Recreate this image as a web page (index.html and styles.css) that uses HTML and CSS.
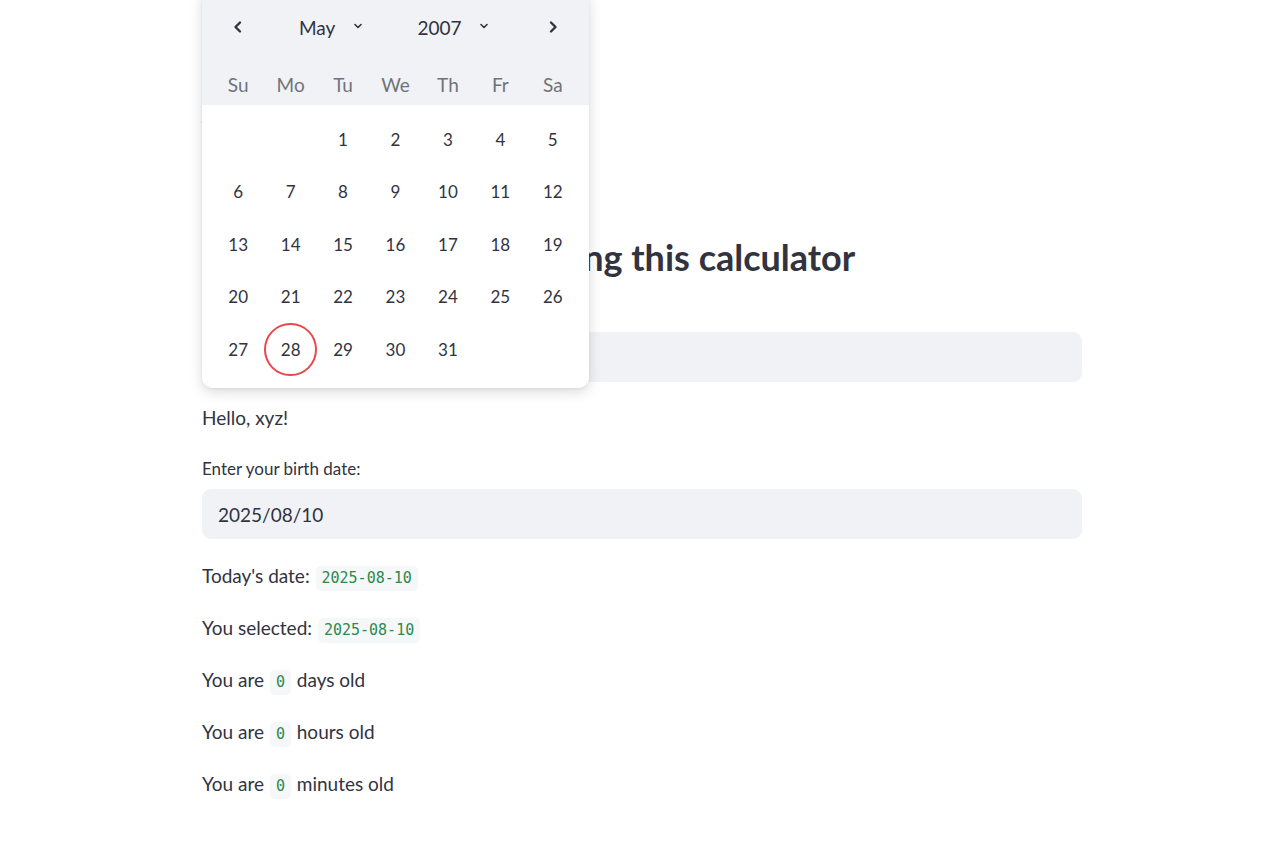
FILE: index.html
```html
<!DOCTYPE html>
<html>
<head>
<meta charset="utf-8">
<link rel="stylesheet" href="styles.css">
</head>
<body>
<main class="main">
  <h1 class="title">Age Calculator</h1>
  <h2 class="heading"><span class="heading-lead">Find your precise age </span>using this calculator</h2>
  <label class="label label-name">Enter your name:</label>
  <div class="input input-name">xyz</div>
  <p class="text text-hello">Hello, xyz!</p>
  <label class="label label-date">Enter your birth date:</label>
  <div class="input input-date">2025/08/10</div>
  <p class="text text-first">Today's date: <code class="code">2025-08-10</code></p>
  <p class="text">You selected: <code class="code">2025-08-10</code></p>
  <p class="text">You are <code class="code">0</code> days old</p>
  <p class="text">You are <code class="code">0</code> hours old</p>
  <p class="text">You are <code class="code">0</code> minutes old</p>
</main>

<div class="popover">
  <div class="cal-head">
    <div class="nav-row">
      <span class="nav-btn">
        <svg width="14" height="14" viewBox="0 0 14 14"><path d="M9 2.5 L4.5 7 L9 11.5" fill="none" stroke="#31333f" stroke-width="2.4" stroke-linecap="round" stroke-linejoin="round"/></svg>
      </span>
      <span class="select select-month">May
        <svg class="caret" width="10" height="8" viewBox="0 0 10 8"><path d="M2 2.5 L5 5.5 L8 2.5" fill="none" stroke="#31333f" stroke-width="1.6" stroke-linecap="round" stroke-linejoin="round"/></svg>
      </span>
      <span class="select select-year">2007
        <svg class="caret" width="10" height="8" viewBox="0 0 10 8"><path d="M2 2.5 L5 5.5 L8 2.5" fill="none" stroke="#31333f" stroke-width="1.6" stroke-linecap="round" stroke-linejoin="round"/></svg>
      </span>
      <span class="nav-btn">
        <svg width="14" height="14" viewBox="0 0 14 14"><path d="M5 2.5 L9.5 7 L5 11.5" fill="none" stroke="#31333f" stroke-width="2.4" stroke-linecap="round" stroke-linejoin="round"/></svg>
      </span>
    </div>
    <div class="weekdays">
      <span>Su</span><span>Mo</span><span>Tu</span><span>We</span><span>Th</span><span>Fr</span><span>Sa</span>
    </div>
  </div>
  <div class="days">
    <span></span><span></span><span>1</span><span>2</span><span>3</span><span>4</span><span>5</span>
    <span>6</span><span>7</span><span>8</span><span>9</span><span>10</span><span>11</span><span>12</span>
    <span>13</span><span>14</span><span>15</span><span>16</span><span>17</span><span>18</span><span>19</span>
    <span>20</span><span>21</span><span>22</span><span>23</span><span>24</span><span>25</span><span>26</span>
    <span>27</span><span class="selected">28</span><span>29</span><span>30</span><span>31</span><span></span><span></span>
  </div>
</div>
</body>
</html>
```
FILE: styles.css
```css
* { box-sizing: border-box; }
html, body { margin: 0; padding: 0; background: #ffffff; }
body {
  font-family: "Lato", "Liberation Sans", sans-serif;
  color: #31333f;
  width: 1273px;
  height: 849px;
  overflow: hidden;
  position: relative;
}
.main {
  width: 880px;
  margin-left: 202px;
  padding-top: 80px;
  display: flex;
  flex-direction: column;
}
.title {
  margin: 0;
  font-size: 44px;
  line-height: 53px;
  font-weight: 700;
  height: 53px;
}
.heading {
  margin: 103px 0 0 0;
  font-size: 36px;
  line-height: 42px;
  height: 42px;
  font-weight: 700;
  white-space: nowrap;
}
.heading-lead { word-spacing: -2.7px; }
.label {
  display: block;
  font-size: 17px;
  line-height: 22px;
}
.label-name { margin-top: 21px; }
.label-date { margin-top: 25px; }
.input {
  height: 50px;
  background: #f0f2f6;
  border-radius: 9px;
  padding: 0 16px;
  display: flex;
  align-items: center;
  font-size: 19px;
}
.input-name { margin-top: 11px; }
.input-date { margin-top: 9px; }
.text {
  margin: 22px 0 0 0;
  font-size: 19px;
  line-height: 30px;
  height: 30px;
}
.text-hello { margin-top: 21px; }
.text-first { margin-top: 22px; }
.code {
  display: inline-block;
  font-family: "DejaVu Sans Mono", "Liberation Mono", monospace;
  font-size: 15px;
  line-height: 17px;
  color: #2b8a4f;
  background: #f6f7f9;
  border-radius: 5px;
  padding: 4px 6px;
  margin: 0 1px;
}

/* calendar popover */
.popover {
  position: absolute;
  left: 202px;
  top: -10px;
  width: 387px;
  background: #ffffff;
  border-radius: 10px;
  box-shadow: 0 4px 14px rgba(0, 0, 0, 0.14), 0 1px 3px rgba(0, 0, 0, 0.06);
  overflow: hidden;
}
.cal-head {
  background: #f0f2f6;
  padding: 10px 10px 0 10px;
  height: 115px;
}
.nav-row {
  height: 54px;
  display: flex;
  align-items: center;
}
.nav-btn {
  width: 52px;
  display: flex;
  justify-content: center;
  align-items: center;
}
.nav-btn:last-child { margin-left: auto; }
.select {
  display: flex;
  align-items: center;
  font-size: 19px;
  gap: 18px;
}
.select-month { margin-left: 35px; }
.select-year { margin-left: 54px; }
.caret { margin-top: -2px; }
.weekdays {
  display: grid;
  grid-template-columns: repeat(7, 1fr);
  margin-top: 12px;
  height: 36px;
  align-items: center;
  font-size: 19px;
  color: #70727a;
  text-align: center;
}
.days {
  display: grid;
  grid-template-columns: repeat(7, 52.43px);
  grid-auto-rows: 52.5px;
  padding: 8px 10px 12px 10px;
  font-size: 17px;
}
.days span {
  display: flex;
  align-items: center;
  justify-content: center;
}
.days .selected {
  border: 2px solid #e8484b;
  border-radius: 50%;
}
```
